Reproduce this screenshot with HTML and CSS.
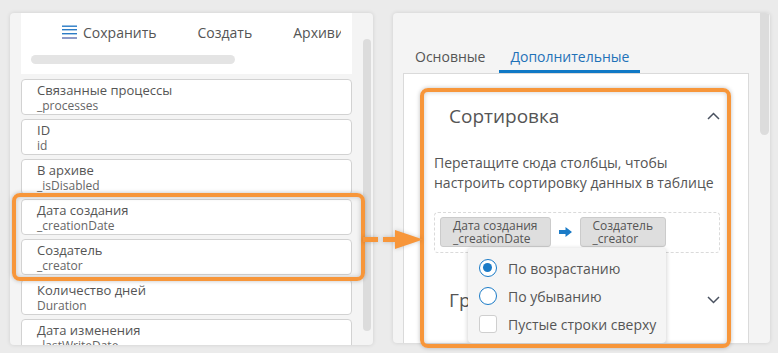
FILE: index.html
```html
<!DOCTYPE html>
<html lang="ru">
<head>
<meta charset="utf-8">
<title>Настройка таблицы</title>
<link rel="stylesheet" href="styles.css">
</head>
<body>
<div class="stage">
  <section class="panel panel-left">
    <div class="left-main">
      <div class="header">
        <div class="toolbar">
          <span class="tool">
            <svg class="tool-icon" width="15" height="14" viewBox="0 0 15 14">
              <rect x="0" y="0.5" width="15" height="1.4" fill="#2b7cc6"/>
              <rect x="0" y="4" width="15" height="1.4" fill="#2b7cc6"/>
              <rect x="0" y="8" width="15" height="1.4" fill="#2b7cc6"/>
              <rect x="0" y="12" width="15" height="2" fill="#8e9bc8"/>
            </svg>Сохранить</span>
          <span class="tool">Создать</span>
          <span class="tool">Архивировать</span>
        </div>
        <div class="hscroll"></div>
      </div>
      <div class="list">
        <div class="item"><div class="item-t">Связанные процессы</div><div class="item-s">_processes</div></div>
        <div class="item"><div class="item-t">ID</div><div class="item-s">id</div></div>
        <div class="item"><div class="item-t">В архиве</div><div class="item-s">_isDisabled</div></div>
        <div class="item"><div class="item-t">Дата создания</div><div class="item-s">_creationDate</div></div>
        <div class="item"><div class="item-t">Создатель</div><div class="item-s">_creator</div></div>
        <div class="item"><div class="item-t">Количество дней</div><div class="item-s">Duration</div></div>
        <div class="item"><div class="item-t">Дата изменения</div><div class="item-s">_lastWriteDate</div></div>
      </div>
    </div>
    <div class="vscroll"></div>
  </section>

  <section class="panel panel-right">
    <div class="right-main">
      <div class="tabs">
        <div class="tab">Основные</div>
        <div class="tab tab-active">Дополнительные</div>
      </div>
      <div class="content">
        <div class="section">
          <div class="sec-head">
            <span class="sec-title">Сортировка</span>
            <svg class="chev" width="13" height="8" viewBox="0 0 13 8"><path d="M1 7 L6.5 1.5 L12 7" fill="none" stroke="#4a5260" stroke-width="1.5"/></svg>
          </div>
          <p class="sec-desc">Перетащите сюда столбцы, чтобы настроить сортировку данных в таблице</p>
          <div class="dropzone">
            <div class="chip"><div>Дата создания</div><div>_creationDate</div></div>
            <svg class="blue-arrow" width="13" height="10" viewBox="0 0 13 10"><path d="M0 3 H6.5 V0 L13 5 L6.5 10 V7 H0 Z" fill="#1b7bc7"/></svg>
            <div class="chip"><div>Создатель</div><div>_creator</div></div>
            <div class="menu">
              <div class="menu-row"><span class="radio radio-on"></span>По возрастанию</div>
              <div class="menu-row"><span class="radio"></span>По убыванию</div>
              <div class="menu-row"><span class="check"></span>Пустые строки сверху</div>
            </div>
          </div>
          <div class="sec-head sec-head-next">
            <span class="sec-title">Группировка</span>
            <svg class="chev" width="13" height="8" viewBox="0 0 13 8"><path d="M1 1 L6.5 6.5 L12 1" fill="none" stroke="#4a5260" stroke-width="1.5"/></svg>
          </div>
        </div>
      </div>
    </div>
    <div class="vscroll vscroll-right"></div>
  </section>
</div>

<div class="hl hl-left"></div>
<div class="hl hl-right"></div>
<svg class="drag-arrow" width="66" height="26" viewBox="0 0 66 26">
  <rect x="3" y="11" width="15" height="5" fill="#f7963a"/>
  <rect x="23" y="11" width="12" height="5" fill="#f7963a"/>
  <path d="M35 4 L63 13.5 L35 23 Z" fill="#f7963a"/>
</svg>
</body>
</html>
```

FILE: styles.css
```css
* { box-sizing: border-box; }

body {
  margin: 0;
  background: #ebebeb;
  font-family: "Open Sans", "DejaVu Sans", sans-serif;
  color: #555;
  width: 778px;
  height: 353px;
  overflow: hidden;
  position: relative;
}

.stage {
  display: flex;
  gap: 20px;
  padding: 13px 0 0 10px;
}

.panel {
  background: #f4f4f4;
  border-radius: 4px;
  box-shadow: 0 0 4px rgba(0, 0, 0, 0.12);
  overflow: hidden;
  display: flex;
}

.panel-left {
  width: 363px;
  height: 332px;
  padding: 0 2px 0 11px;
  gap: 11px;
}

.left-main {
  width: 331px;
  display: flex;
  flex-direction: column;
}

.header {
  background: #fff;
  padding: 7px 0 10px 0;
  height: 61px;
}

.toolbar {
  display: flex;
  gap: 41px;
  height: 24px;
  align-items: center;
  margin: 0 11px 0 41px;
  overflow: hidden;
  white-space: nowrap;
  font-size: 14px;
  color: #555;
}

.tool {
  display: flex;
  align-items: center;
  gap: 6px;
  flex: none;
}

.tool-icon { flex: none; }

.hscroll {
  margin: 11px 0 0 10px;
  width: 204px;
  height: 9px;
  border-radius: 5px;
  background: #e4e4e4;
}

.list {
  display: flex;
  flex-direction: column;
  gap: 4px;
  padding-top: 5px;
}

.item {
  height: 36px;
  flex: none;
  background: #fff;
  border: 1px solid #d2d2d2;
  border-radius: 4px;
  padding: 2px 15px 0;
}

.item-t {
  font-size: 13px;
  line-height: 17px;
  color: #555;
}

.item-s {
  font-size: 12px;
  line-height: 14px;
  color: #666;
}

.vscroll {
  width: 8px;
  height: 292px;
  margin-top: 26px;
  border-radius: 4px;
  background: #dcdcdc;
  flex: none;
}

.panel-right {
  width: 377px;
  height: 330px;
  padding: 0 1px 0 10px;
  gap: 11px;
}

.right-main {
  width: 346px;
  display: flex;
  flex-direction: column;
}

.tabs {
  display: flex;
  gap: 3px;
  margin-top: 34px;
  padding-left: 1px;
}

.tab {
  font-size: 14px;
  line-height: 20px;
  padding: 0 11px 3px;
  border-bottom: 3px solid transparent;
  color: #555;
}

.tab-active {
  color: #1f72b8;
  border-bottom-color: #0f78c5;
}

.content {
  flex: 1;
  background: #fff;
  border: 1px solid #dadada;
  border-bottom: none;
}

.section {
  padding: 22px 28px 0 30px;
}

.sec-head {
  height: 40px;
  display: flex;
  align-items: center;
  justify-content: space-between;
  padding-left: 15px;
}

.sec-title {
  font-size: 19px;
  color: #555;
}

.chev { flex: none; }

.sec-desc {
  margin: 17px 0 0;
  font-size: 14px;
  line-height: 20px;
  color: #555;
}

.dropzone {
  position: relative;
  margin-top: 19px;
  border: 1px dashed #dadada;
  border-radius: 4px;
  padding: 4px 5px 5px;
  display: flex;
  align-items: center;
  gap: 8px;
}

.chip {
  height: 30px;
  background: #dedede;
  border: 1px solid #cbcbcb;
  border-radius: 3px;
  padding: 1px 12px 0;
  font-size: 12px;
  line-height: 13px;
  color: #555;
  white-space: nowrap;
}

.blue-arrow { flex: none; }

.menu {
  position: absolute;
  left: 33px;
  top: 35px;
  width: 198px;
  height: 95px;
  background: #f5f5f5;
  border-radius: 4px;
  box-shadow: 0 1px 5px rgba(0, 0, 0, 0.22);
  padding: 6px 0 5px 11px;
  z-index: 2;
}

.menu-row {
  height: 28px;
  display: flex;
  align-items: center;
  gap: 11px;
  font-size: 14px;
  color: #555;
  white-space: nowrap;
}

.radio {
  width: 18px;
  height: 18px;
  border-radius: 50%;
  border: 1.5px solid #1b7bc7;
  background: #fff;
  flex: none;
  position: relative;
}

.radio-on::after {
  content: "";
  position: absolute;
  left: 3px;
  top: 3px;
  width: 9px;
  height: 9px;
  border-radius: 50%;
  background: #1b7bc7;
}

.check {
  width: 18px;
  height: 18px;
  border-radius: 3px;
  border: 1px solid #cfcfcf;
  background: #fff;
  flex: none;
}

.sec-head-next {
  margin-top: 27px;
}

.vscroll-right {
  width: 9px;
  height: 122px;
  margin-top: 0;
  border-radius: 0 0 5px 5px;
  background: #dcdcdc;
}

.hl {
  position: absolute;
  border: 4px solid #f7963a;
  border-radius: 8px;
  box-shadow: 0 0 4px rgba(0, 0, 0, 0.25), inset 0 0 5px rgba(0, 0, 0, 0.2);
  pointer-events: none;
}

.hl-left {
  left: 12px;
  top: 193px;
  width: 353px;
  height: 88px;
}

.hl-right {
  left: 420px;
  top: 88px;
  width: 311px;
  height: 260px;
}

.drag-arrow {
  position: absolute;
  left: 360px;
  top: 226px;
  filter: drop-shadow(0 0 2px rgba(0, 0, 0, 0.2));
}
```
